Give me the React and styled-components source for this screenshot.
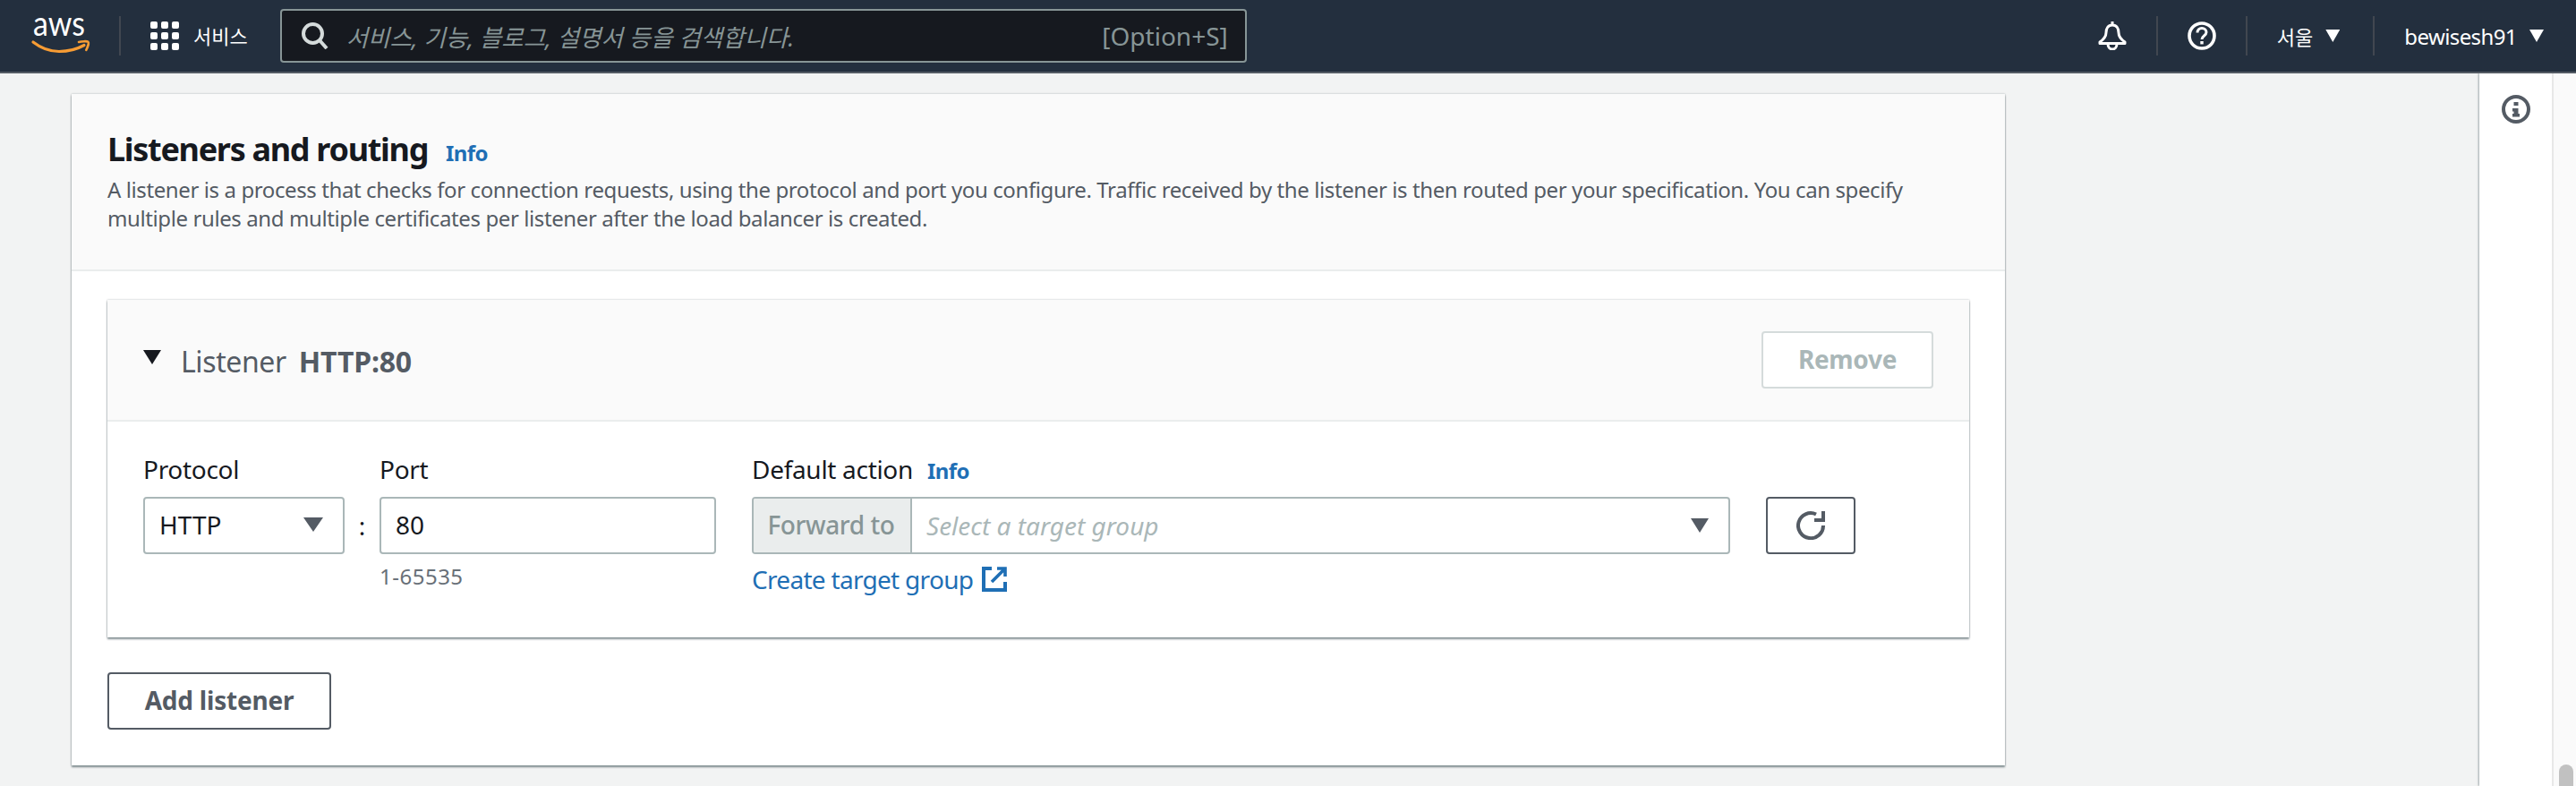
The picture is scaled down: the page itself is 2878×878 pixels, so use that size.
import React from "react";
import styled, { createGlobalStyle } from "styled-components";

const FONT = `"Noto Sans", "Noto Sans CJK KR", sans-serif`;

const GlobalStyle = createGlobalStyle`
  html, body {
    margin: 0;
    padding: 0;
    height: 878px;
    overflow: hidden;
    background: #f2f3f3;
    font-family: ${FONT};
  }
  * { box-sizing: border-box; }
`;

const TopBar = styled.header`
  display: flex;
  align-items: center;
  height: 82px;
  background: #232f3e;
  border-bottom: 2px solid #545b64;
  color: #fff;
  padding: 0 36px;
`;

const Logo = styled.svg`
  width: 64px;
  height: 60px;
  flex: none;
  overflow: visible;
`;

const BarDivider = styled.span`
  width: 2px;
  height: 44px;
  flex: none;
  background: #414750;
  margin: ${(p) => p.$margin || "0"};
`;

const ServicesText = styled.span`
  font-size: 22px;
  line-height: 30px;
  margin: 0 36px 0 16px;
  white-space: nowrap;
`;

const SearchBox = styled.div`
  display: flex;
  align-items: center;
  width: 1080px;
  height: 60px;
  flex: none;
  background: #16191f;
  border: 2px solid #879596;
  border-radius: 4px;
  padding: 0 19px 0 22px;
  color: #879596;
`;

const SearchHint = styled.span`
  flex: 1;
  margin-left: 20px;
  font-style: italic;
  font-size: 26.5px;
`;

const Shortcut = styled.span`
  font-size: 28px;
  white-space: nowrap;
`;

const BarRight = styled.div`
  margin-left: auto;
  display: flex;
  align-items: center;
`;

const BarText = styled.span`
  font-size: ${(p) => p.$size || 24}px;
  letter-spacing: ${(p) => p.$spacing || 0}px;
  white-space: nowrap;
`;

const Caret = styled.span`
  display: inline-block;
  flex: none;
  width: ${(p) => p.$w || 16}px;
  height: ${(p) => p.$h || 14}px;
  background: ${(p) => p.$color || "#fff"};
  clip-path: polygon(0 0, 100% 0, 50% 100%);
  margin: ${(p) => p.$margin || "0"};
`;

const Body = styled.div`
  display: flex;
  height: 796px;
  overflow: hidden;
`;

const Main = styled.main`
  flex: 1;
  padding: 23px 0 0 80px;
`;

const Card = styled.section`
  width: 2160px;
  height: 750px;
  background: #fff;
  box-shadow: 0 2px 2px rgba(0, 28, 36, 0.45), 0 0 2px rgba(0, 28, 36, 0.3);
`;

const CardHead = styled.div`
  height: 198px;
  background: #fafafa;
  border-bottom: 2px solid #eaeded;
  padding: 40px 40px 0;
`;

const TitleRow = styled.div`
  display: flex;
  align-items: baseline;
  gap: 20px;
`;

const Title = styled.h2`
  margin: 0;
  font-size: 36px;
  line-height: 44px;
  font-weight: 700;
  letter-spacing: -1.3px;
  color: #16191f;
`;

const InfoLink = styled.a`
  font-size: 24px;
  font-weight: 700;
  letter-spacing: -0.6px;
  color: #1f6fb5;
`;

const Description = styled.p`
  margin: 7px 0 0;
  font-size: 24px;
  line-height: 32px;
  letter-spacing: -0.4px;
  white-space: nowrap;
  color: #545b64;
`;

const CardBody = styled.div`
  padding: 32px 40px 0;
`;

const Listener = styled.div`
  height: 377px;
  background: #fff;
  box-shadow: 0 2px 2px rgba(0, 28, 36, 0.45), 0 0 2px rgba(0, 28, 36, 0.3);
`;

const ListenerHead = styled.div`
  display: flex;
  align-items: center;
  height: 136px;
  background: #fafafa;
  border-bottom: 2px solid #eaeded;
  padding: 0 40px;
`;

const ListenerTitle = styled.h3`
  margin: 3px 0 0 22px;
  font-size: 32px;
  line-height: 40px;
  font-weight: 400;
  letter-spacing: -0.4px;
  color: #545b64;

  b {
    margin-left: 14px;
    font-weight: 700;
    letter-spacing: -0.2px;
  }
`;

const RemoveButton = styled.button`
  margin-left: auto;
  width: 192px;
  height: 64px;
  padding: 0 0 2px;
  background: #fff;
  border: 2px solid #d5dbdb;
  border-radius: 4px;
  color: #aab7b8;
  font-family: ${FONT};
  font-size: 28px;
  font-weight: 700;
  letter-spacing: -0.3px;
`;

const Fields = styled.div`
  display: flex;
  padding: 36px 40px 0;
`;

const Field = styled.div`
  width: ${(p) => p.$w}px;
  flex: none;
  margin-left: ${(p) => p.$left || 0}px;
`;

const Label = styled.label`
  display: flex;
  align-items: baseline;
  gap: 16px;
  height: 40px;
  margin-bottom: 8px;
  font-size: 28px;
  line-height: 34px;
  letter-spacing: -0.3px;
  color: #16191f;
`;

const Control = styled.div`
  display: flex;
  align-items: center;
  height: 64px;
  background: #fff;
  border: 2px solid #aab7b8;
  border-radius: 4px;
  padding: 0 22px 2px 16px;
  font-size: 28px;
  color: #16191f;
  justify-content: ${(p) => (p.$between ? "space-between" : "flex-start")};
`;

const Colon = styled.div`
  width: 39px;
  flex: none;
  padding-top: 48px;
  height: 112px;
  line-height: 64px;
  text-align: center;
  font-size: 28px;
  color: #16191f;
`;

const Hint = styled.div`
  margin-top: 9px;
  font-size: 24px;
  line-height: 32px;
  letter-spacing: 0.5px;
  color: #687078;
`;

const ForwardBox = styled.div`
  display: flex;
  height: 64px;
  background: #fff;
  border: 2px solid #aab7b8;
  border-radius: 4px;
  overflow: hidden;
`;

const ForwardTag = styled.div`
  display: flex;
  align-items: center;
  justify-content: center;
  width: 177px;
  flex: none;
  padding: 0 2px 2px 0;
  background: #eaeded;
  border-right: 2px solid #aab7b8;
  color: #879596;
  font-size: 28px;
  font-weight: 500;
  letter-spacing: -0.4px;
`;

const ForwardSelect = styled.div`
  flex: 1;
  display: flex;
  align-items: center;
  justify-content: space-between;
  padding: 0 22px 0 16px;
  color: #aab7b8;
  font-size: 28px;
  font-style: italic;
`;

const CreateLink = styled.a`
  display: flex;
  align-items: center;
  gap: 10px;
  margin-top: 9px;
  font-size: 28px;
  line-height: 38px;
  letter-spacing: -0.7px;
  color: #1f6fb5;
`;

const RefreshButton = styled.button`
  display: flex;
  align-items: center;
  justify-content: center;
  width: 100px;
  height: 64px;
  flex: none;
  margin: 48px 0 0 40px;
  padding: 0;
  background: #fff;
  border: 2px solid #545b64;
  border-radius: 4px;
`;

const AddButton = styled.button`
  display: block;
  width: 250px;
  height: 64px;
  margin-top: 39px;
  padding: 0 0 2px;
  background: #fff;
  border: 2px solid #545b64;
  border-radius: 4px;
  color: #545b64;
  font-family: ${FONT};
  font-size: 28px;
  font-weight: 700;
  letter-spacing: -0.2px;
`;

const SidePanel = styled.aside`
  display: flex;
  justify-content: center;
  width: 81px;
  flex: none;
  padding-top: 24px;
  background: #fff;
  box-shadow: -1px 0 2px rgba(0, 28, 36, 0.35);
`;

const ScrollTrack = styled.div`
  display: flex;
  align-items: flex-end;
  justify-content: center;
  width: 27px;
  flex: none;
  padding-left: 2px;
  background: #fafafa;
  border-left: 2px solid #e8e8e8;
`;

const ScrollThumb = styled.div`
  width: 16px;
  height: 24px;
  background: #c1c1c1;
  border-radius: 8px 8px 0 0;
`;

const AwsLogo = () => (
  <Logo viewBox="0 0 64 60">
    <text
      x="1"
      y="30"
      fontFamily="Lato, sans-serif"
      fontSize="39"
      fill="#fff"
      textLength="58"
      lengthAdjust="spacingAndGlyphs"
    >
      aws
    </text>
    <path d="M1 37c9 7 19 10.500 29 10.500 10 0 20-2.500 28-7" fill="none" stroke="#f79c34" strokeWidth="3.200" strokeLinecap="round" />
    <path d="M52 37c3-.8 9-1.300 10.500-.2 1 1-.5 5.700-2.200 9" fill="none" stroke="#f79c34" strokeWidth="2.600" strokeLinecap="round" />
  </Logo>
);

const GridIcon = () => (
  <svg width="32" height="32" viewBox="0 0 32 32" style={{ flex: "none" }}>
    {[0, 12, 24].flatMap((y) =>
      [0, 12, 24].map((x) => <rect key={`${x}-${y}`} x={x} y={y} width="8" height="8" rx="2" fill="#fff" />)
    )}
  </svg>
);

const SearchIcon = () => (
  <svg width="30" height="30" viewBox="0 0 30 30" style={{ flex: "none" }}>
    <circle cx="12.500" cy="12.500" r="10.500" fill="none" stroke="#d5dbdb" strokeWidth="4" />
    <path d="M20 20l8 9" stroke="#d5dbdb" strokeWidth="4" />
  </svg>
);

const BellIcon = () => (
  <svg width="32" height="32" viewBox="0 0 32 32" style={{ flex: "none" }}>
    <path
      d="M16 0v4M16 4c-5 0-7 4-7 8.500 0 4-2 7-7 10.500v1.500h28V23c-5-3.500-7-6.500-7-10.500C23 8 21 4 16 4zM11 25c0 8 10 8 10 0"
      fill="none"
      stroke="#fff"
      strokeWidth="3"
      strokeLinejoin="round"
    />
  </svg>
);

const HelpIcon = () => (
  <svg width="32" height="32" viewBox="0 0 32 32" style={{ flex: "none" }}>
    <circle cx="16" cy="16" r="14" fill="none" stroke="#fff" strokeWidth="3.600" />
    <path d="M11 12.500c0-3 2.200-5 5-5s5 2 5 4.500c0 4-5 4-5 8" fill="none" stroke="#fff" strokeWidth="3" />
    <rect x="14.300" y="22" width="3.400" height="3.400" fill="#fff" />
  </svg>
);

const InfoIcon = () => (
  <svg width="32" height="32" viewBox="0 0 32 32">
    <circle cx="16" cy="16" r="14" fill="none" stroke="#545b64" strokeWidth="4" />
    <path d="M13.500 8h5v4h-5zM12 15h6.500v6H20v3.500h-8V21h1.500v-2.500H12z" fill="#545b64" />
  </svg>
);

const ExternalIcon = () => (
  <svg width="28" height="28" viewBox="0 0 28 28" style={{ flex: "none" }}>
    <path d="M11 2H2v24h24v-9" fill="none" stroke="#1f6fb5" strokeWidth="4" />
    <path d="M17 2h9v9M25 3L11 17" fill="none" stroke="#1f6fb5" strokeWidth="3.600" />
  </svg>
);

const RefreshIcon = () => (
  <svg width="32" height="32" viewBox="0 0 32 32">
    <path d="M30 16A14 14 0 1 1 22 3.500" fill="none" stroke="#545b64" strokeWidth="4" />
    <path d="M20 12h12V0h-4v8h-8z" fill="#545b64" />
  </svg>
);

export default function App() {
  return (
    <>
      <GlobalStyle />
      <TopBar>
        <AwsLogo />
        <BarDivider $margin="0 33px" />
        <GridIcon />
        <ServicesText>서비스</ServicesText>
        <SearchBox>
          <SearchIcon />
          <SearchHint>서비스, 기능, 블로그, 설명서 등을 검색합니다.</SearchHint>
          <Shortcut>[Option+S]</Shortcut>
        </SearchBox>
        <BarRight>
          <BellIcon />
          <BarDivider $margin="0 33px" />
          <HelpIcon />
          <BarDivider $margin="0 33px" />
          <BarText $size={22}>서울</BarText>
          <Caret $margin="0 37px 0 14px" />
          <BarDivider $margin="0 33px 0 0" />
          <BarText $spacing={-0.6}>bewisesh91</BarText>
          <Caret $margin="0 0 0 14px" />
        </BarRight>
      </TopBar>
      <Body>
        <Main>
          <Card>
            <CardHead>
              <TitleRow>
                <Title>Listeners and routing</Title>
                <InfoLink>Info</InfoLink>
              </TitleRow>
              <Description>
                A listener is a process that checks for connection requests, using the protocol and port you
                configure. Traffic received by the listener is then routed per your specification. You can specify
                <br />
                multiple rules and multiple certificates per listener after the load balancer is created.
              </Description>
            </CardHead>
            <CardBody>
              <Listener>
                <ListenerHead>
                  <Caret $w={20} $h={16} $color="#16191f" $margin="0 0 6px" />
                  <ListenerTitle>
                    Listener<b>HTTP:80</b>
                  </ListenerTitle>
                  <RemoveButton>Remove</RemoveButton>
                </ListenerHead>
                <Fields>
                  <Field $w={225}>
                    <Label>Protocol</Label>
                    <Control $between>
                      HTTP
                      <Caret $w={22} $h={16} $color="#545b64" />
                    </Control>
                  </Field>
                  <Colon>:</Colon>
                  <Field $w={376}>
                    <Label>Port</Label>
                    <Control>80</Control>
                    <Hint>1-65535</Hint>
                  </Field>
                  <Field $w={1093} $left={40}>
                    <Label>
                      Default action <InfoLink>Info</InfoLink>
                    </Label>
                    <ForwardBox>
                      <ForwardTag>Forward to</ForwardTag>
                      <ForwardSelect>
                        Select a target group
                        <Caret $w={20} $h={16} $color="#545b64" />
                      </ForwardSelect>
                    </ForwardBox>
                    <CreateLink>
                      Create target group
                      <ExternalIcon />
                    </CreateLink>
                  </Field>
                  <RefreshButton>
                    <RefreshIcon />
                  </RefreshButton>
                </Fields>
              </Listener>
              <AddButton>Add listener</AddButton>
            </CardBody>
          </Card>
        </Main>
        <SidePanel>
          <InfoIcon />
        </SidePanel>
        <ScrollTrack>
          <ScrollThumb />
        </ScrollTrack>
      </Body>
    </>
  );
}
